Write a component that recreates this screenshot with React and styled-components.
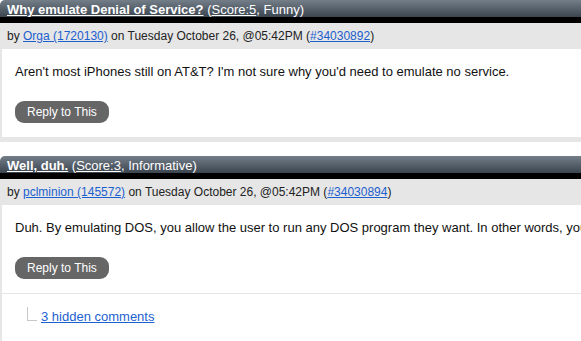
import React from "react";
import styled, { createGlobalStyle } from "styled-components";

const Global = createGlobalStyle`
  html, body { margin: 0; padding: 0; background: #fff; overflow: hidden; }
  body { font-family: "Liberation Sans", Arial, Helvetica, sans-serif; }
`;

const Page = styled.div`
  width: 780px;
  display: flex;
  flex-direction: column;
  gap: 14px;
`;

const Comment = styled.article`
  display: flex;
  flex-direction: column;
`;

const TitleBar = styled.h4`
  margin: 0;
  height: 17px;
  line-height: 19px;
  padding: 0 7px;
  background: linear-gradient(#737e89, #3b4550);
  border-bottom: 6px solid #000;
  border-top-left-radius: 5px;
  color: #fff;
  font-size: 13px;
  font-weight: bold;
  white-space: nowrap;
  overflow: hidden;
`;

const TitleLink = styled.a`
  color: #fff;
  text-decoration: underline;
`;

const Score = styled.span`
  font-weight: normal;
  a { color: #fff; text-decoration: underline; }
`;

const Meta = styled.div`
  height: 26px;
  line-height: 26px;
  padding: 0 7px;
  background: #e6e6e6;
  color: #222;
  font-size: 12px;
  white-space: nowrap;
`;

const Link = styled.a`
  color: #1c5fcf;
  text-decoration: underline;
`;

const Body = styled.div`
  border-left: 2px solid #e6e6e6;
  border-bottom: ${(p) => (p.$closed ? "5px solid #e6e6e6" : "0")};
  padding: 15px 13px 14px;
`;

const Text = styled.p`
  margin: 0 0 21px;
  font-size: 13px;
  line-height: 16px;
  color: #111;
  white-space: nowrap;
`;

const ReplyButton = styled.button`
  display: block;
  height: 22px;
  padding: 0 12px;
  border: 0;
  border-radius: 9px;
  background: #666;
  color: #fff;
  font-family: inherit;
  font-size: 12px;
  line-height: 22px;
  cursor: pointer;
`;

const Hidden = styled.div`
  border-left: 2px solid #e6e6e6;
  border-top: 1px solid #e6e6e6;
  padding: 13px 25px 20px;
  display: flex;
  align-items: flex-end;
  gap: 4px;
  font-size: 13px;
`;

const Corner = styled.span`
  width: 9px;
  height: 13px;
  border-left: 1px solid #c8c8c8;
  border-bottom: 1px solid #c8c8c8;
  margin-bottom: 3px;
`;

const comments = [
  {
    title: "Why emulate Denial of Service?",
    score: "Score:5",
    label: "Funny",
    user: "Orga (1720130)",
    id: "#34030892",
    text: "Aren't most iPhones still on AT&T? I'm not sure why you'd need to emulate no service.",
    closed: true,
  },
  {
    title: "Well, duh.",
    score: "Score:3",
    label: "Informative",
    user: "pclminion (145572)",
    id: "#34030894",
    text: "Duh. By emulating DOS, you allow the user to run any DOS program they want. In other words, you can run anything you like on it.",
    hidden: "3 hidden comments",
  },
];

export default function App() {
  return (
    <>
      <Global />
      <Page>
        {comments.map((c) => (
          <Comment key={c.id}>
            <TitleBar>
              <TitleLink href="#">{c.title}</TitleLink>{" "}
              <Score>
                (<a href="#">{c.score}</a>, {c.label})
              </Score>
            </TitleBar>
            <Meta>
              by <Link href="#">{c.user}</Link> on Tuesday October 26, @05:42PM (
              <Link href="#">{c.id}</Link>)
            </Meta>
            <Body $closed={c.closed}>
              <Text>{c.text}</Text>
              <ReplyButton>Reply to This</ReplyButton>
            </Body>
            {c.hidden && (
              <Hidden>
                <Corner />
                <Link href="#">{c.hidden}</Link>
              </Hidden>
            )}
          </Comment>
        ))}
      </Page>
    </>
  );
}
